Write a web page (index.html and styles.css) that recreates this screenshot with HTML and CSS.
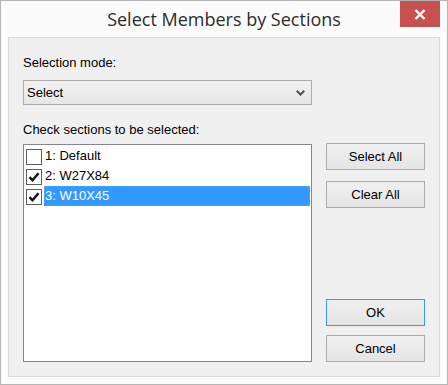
FILE: index.html
```html
<!DOCTYPE html>
<html lang="en">

<head>
    <meta charset="UTF-8">
    <meta name="viewport" content="width=device-width, initial-scale=1.0">
    <title>Select Members by Sections</title>
    <link rel="stylesheet" href="styles.css">
</head>

<body>

    <div class="window">
        <!-- Title bar -->
        <div class="titlebar">
            <span class="title">Select Members by Sections</span>
            <button class="close-btn" type="button" aria-label="Close">
                <svg width="12" height="11" viewBox="0 0 12 11">
                    <path d="M1.5 1 L10.5 10 M10.5 1 L1.5 10" stroke="#fff" stroke-width="2.4" fill="none" />
                </svg>
            </button>
        </div>

        <div class="client">
            <div class="left-col">
                <label class="field-label" for="mode">Selection mode:</label>
                <div class="combo" id="mode">
                    <span>Select</span>
                    <svg class="combo-arrow" width="9" height="6" viewBox="0 0 9 6">
                        <path d="M0.8 0.8 L4.5 4.6 L8.2 0.8" stroke="#4a4a4a" stroke-width="2" fill="none" />
                    </svg>
                </div>

                <div class="field-label second">Check sections to be selected:</div>
                <ul class="section-list">
                    <li class="section-item">
                        <span class="check"></span>
                        <span class="item-text">1: Default</span>
                    </li>
                    <li class="section-item">
                        <span class="check checked">
                            <svg width="14" height="14" viewBox="0 0 14 14">
                                <path d="M2.5 7.2 L5.5 10.3 L11.5 3.2" stroke="#111" stroke-width="2.4" fill="none" />
                            </svg>
                        </span>
                        <span class="item-text">2: W27X84</span>
                    </li>
                    <li class="section-item">
                        <span class="check checked">
                            <svg width="14" height="14" viewBox="0 0 14 14">
                                <path d="M2.5 7.2 L5.5 10.3 L11.5 3.2" stroke="#111" stroke-width="2.4" fill="none" />
                            </svg>
                        </span>
                        <span class="item-text selected">3: W10X45</span>
                    </li>
                </ul>
            </div>

            <div class="side-col">
                <button class="dlg-btn" type="button">Select All</button>
                <button class="dlg-btn clear-btn" type="button">Clear All</button>
                <div class="spacer"></div>
                <button class="dlg-btn default-btn" type="button">OK</button>
                <button class="dlg-btn cancel-btn" type="button">Cancel</button>
            </div>
        </div>
    </div>

</body>

</html>
```

FILE: styles.css
```css
html,
body {
  margin: 0;
  padding: 0;
  background-color: #fbfbfb;
}
.window {
  width: 448px;
  height: 385px;
  box-sizing: border-box;
  border: 1px solid #b5b5b5;
  background-color: #fbfbfb;
  display: flex;
  flex-direction: column;
  font-family: "Liberation Sans", Arial, sans-serif;
  font-size: 13px;
  color: #000;
}

/* Title bar */
.titlebar {
  height: 36px;
  display: grid;
  grid-template-columns: 1fr auto 1fr;
  align-items: start;
}
.title {
  grid-column: 2;
  font-family: "Open Sans", sans-serif;
  font-size: 18px;
  line-height: 37px;
  color: #2b2b2b;
  white-space: nowrap;
}
.close-btn {
  grid-column: 3;
  justify-self: end;
  width: 40px;
  height: 26px;
  margin-right: 7px;
  padding: 0;
  border: none;
  background-color: #c75050;
  display: flex;
  align-items: center;
  justify-content: center;
}

/* Client area */
.client {
  flex: 1;
  margin: 0 7px 7px 7px;
  border: 1px solid #d9d9d9;
  background-color: #f0f0f0;
  padding: 17px 14px 14px 14px;
  display: flex;
  gap: 14px;
}
.left-col {
  width: 289px;
  display: flex;
  flex-direction: column;
}
.field-label {
  display: block;
  line-height: 15px;
  height: 15px;
}
.field-label.second {
  margin-top: 17px;
}
.combo {
  margin-top: 10px;
  height: 25px;
  box-sizing: border-box;
  border: 1px solid #acacac;
  background: linear-gradient(#f2f2f2, #e6e6e6);
  display: flex;
  align-items: center;
  justify-content: space-between;
  padding: 0 6px 0 3px;
}
.combo-arrow {
  display: block;
}

/* Checked list */
.section-list {
  list-style: none;
  margin: 7px 0 0 0;
  padding: 1px 1px 0 2px;
  height: 218px;
  box-sizing: border-box;
  border: 1px solid #828790;
  background-color: #fff;
}
.section-item {
  height: 20px;
  display: flex;
  align-items: center;
}
.check {
  width: 16px;
  height: 16px;
  box-sizing: border-box;
  border: 1px solid #5f5f5f;
  background-color: #fff;
  margin-top: 2px;
  display: flex;
  align-items: center;
  justify-content: center;
}
.item-text {
  margin-left: 2px;
  padding-left: 1px;
  height: 20px;
  line-height: 20px;
  flex: 1;
  box-sizing: border-box;
}
.item-text.selected {
  background-color: #3399ff;
  color: #fff;
  outline: 1px dotted #e0892b;
  outline-offset: -1px;
}

/* Buttons column */
.side-col {
  width: 99px;
  display: flex;
  flex-direction: column;
  padding-top: 88px;
}
.dlg-btn {
  height: 27px;
  width: 99px;
  padding: 0;
  border: 1px solid #adadad;
  background: linear-gradient(#f0f0f0, #e5e5e5);
  font-family: "Liberation Sans", Arial, sans-serif;
  font-size: 13px;
  color: #000;
}
.clear-btn {
  margin-top: 11px;
}
.spacer {
  flex: 1;
}
.default-btn {
  border-color: #3399ff;
}
.cancel-btn {
  margin-top: 9px;
}
```
